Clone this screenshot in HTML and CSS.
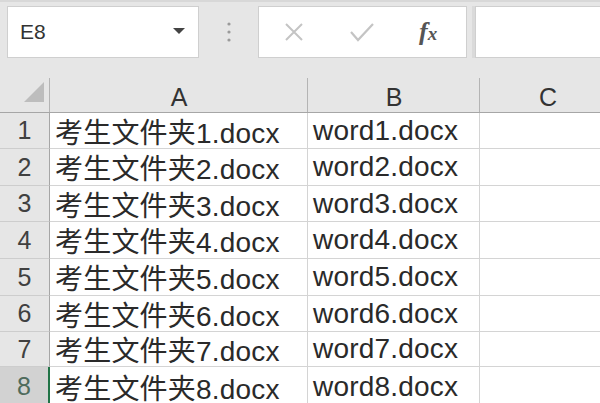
FILE: index.html
```html
<!DOCTYPE html>
<html lang="zh">

<head>
    <meta charset="UTF-8">
    <title>工作表</title>
    <link rel="stylesheet" href="styles.css">
</head>

<body>
    <div class="toolbar">
        <div class="namebox">
            <span class="cellref">E8</span>
            <svg class="caret" width="14" height="8" viewBox="0 0 14 8"><path d="M1 1h12L7 7z" fill="#444"/></svg>
        </div>
        <div class="grip">
            <svg width="6" height="22" viewBox="0 0 6 22">
                <circle cx="3" cy="3" r="1.6" fill="#9a9a9a"/>
                <circle cx="3" cy="11" r="1.6" fill="#9a9a9a"/>
                <circle cx="3" cy="19" r="1.6" fill="#9a9a9a"/>
            </svg>
        </div>
        <div class="fbuttons">
            <svg class="btn" width="22" height="22" viewBox="0 0 22 22"><path d="M3 3l16 16M19 3L3 19" stroke="#c4c4c4" stroke-width="2" fill="none"/></svg>
            <svg class="btn" width="26" height="22" viewBox="0 0 26 22"><path d="M2 11l7 8L24 3" stroke="#c4c4c4" stroke-width="2.2" fill="none"/></svg>
            <span class="fx"><i>f</i><small>x</small></span>
        </div>
        <div class="finput"></div>
    </div>

    <div class="sheet">
        <div class="corner"><svg width="22" height="22" viewBox="0 0 22 22"><path d="M21 1V21H1z" fill="#bdbdbd"/></svg></div>
        <div class="colhead">A</div>
        <div class="colhead">B</div>
        <div class="colhead">C</div>

        <div class="rowhead">1</div><div class="cell">考生文件夹1.docx</div><div class="cell">word1.docx</div><div class="cell"></div>
        <div class="rowhead">2</div><div class="cell">考生文件夹2.docx</div><div class="cell">word2.docx</div><div class="cell"></div>
        <div class="rowhead">3</div><div class="cell">考生文件夹3.docx</div><div class="cell">word3.docx</div><div class="cell"></div>
        <div class="rowhead">4</div><div class="cell">考生文件夹4.docx</div><div class="cell">word4.docx</div><div class="cell"></div>
        <div class="rowhead">5</div><div class="cell">考生文件夹5.docx</div><div class="cell">word5.docx</div><div class="cell"></div>
        <div class="rowhead">6</div><div class="cell">考生文件夹6.docx</div><div class="cell">word6.docx</div><div class="cell"></div>
        <div class="rowhead">7</div><div class="cell">考生文件夹7.docx</div><div class="cell">word7.docx</div><div class="cell"></div>
        <div class="rowhead active">8</div><div class="cell">考生文件夹8.docx</div><div class="cell">word8.docx</div><div class="cell"></div>
    </div>
</body>

</html>
```

FILE: styles.css
```css
body {
    margin: 0;
    padding: 0;
    width: 600px;
    height: 403px;
    overflow: hidden;
    background: #fff;
    font-family: "Liberation Sans", "Noto Sans CJK SC", sans-serif;
    color: #262626;
}

/* 编辑栏 */
.toolbar {
    height: 62px;
    box-sizing: border-box;
    background: #e6e6e6;
    border-top: 2px solid #d8d8d8;
    padding: 4px 0 4px 7px;
    display: flex;
    align-items: stretch;
}

.namebox {
    width: 192px;
    box-sizing: border-box;
    background: #fff;
    border: 1px solid #cfcfcf;
    display: flex;
    align-items: center;
    justify-content: space-between;
    padding: 0 12px 0 12px;
}

.cellref {
    font-size: 21px;
    color: #333;
}

.caret {
    margin-top: -2px;
}

.grip {
    width: 59px;
    display: flex;
    align-items: center;
    justify-content: center;
}

.fbuttons {
    width: 209px;
    box-sizing: border-box;
    background: #fff;
    border: 1px solid #cfcfcf;
    display: flex;
    align-items: center;
    padding-left: 24px;
    gap: 44px;
}

.fx {
    font-family: "Liberation Serif", serif;
    color: #555;
    margin-left: 0;
}

.fx i {
    font-size: 26px;
    font-weight: bold;
}

.fx small {
    font-size: 19px;
    font-style: italic;
    font-weight: bold;
}

.finput {
    flex: 1;
    margin-left: 8px;
    background: #fff;
    border: 1px solid #cfcfcf;
    border-right: 0;
    box-shadow: -3px 0 0 #dadada;
}

/* 表格 */
.sheet {
    display: grid;
    grid-template-columns: 50px 258px 172px 136px;
    grid-template-rows: 51px 36px 37px 36px 37px 37px 36px 35px 40px;
}

.corner,
.colhead {
    position: relative;
    background: #e6e6e6;
    border-bottom: 1px solid #a6a6a6;
    box-sizing: border-box;
}

.corner {
    display: flex;
    align-items: flex-end;
    justify-content: flex-end;
    padding: 0 5px 9px 0;
}

.colhead {
    display: flex;
    align-items: center;
    justify-content: center;
    padding-top: 20px;
    font-size: 25px;
    color: #333;
}

.corner::after,
.colhead::after {
    content: "";
    position: absolute;
    right: 0;
    top: 16px;
    bottom: 0;
    width: 1px;
    background: #b4b4b4;
}

.rowhead {
    background: #e6e6e6;
    border-right: 1px solid #a6a6a6;
    border-bottom: 1px solid #cdcdcd;
    box-sizing: border-box;
    display: flex;
    align-items: center;
    justify-content: center;
    font-size: 25px;
    color: #404040;
}

.rowhead.active {
    background: #d2d2d2;
    color: #4f6b5c;
    border-right: 2px solid #217346;
}

.cell {
    border-right: 1px solid #d4d4d4;
    border-bottom: 1px solid #d4d4d4;
    box-sizing: border-box;
    display: flex;
    align-items: center;
    padding-left: 5px;
    font-size: 28px;
    letter-spacing: 0.2px;
    white-space: nowrap;
    overflow: hidden;
    color: #2a2a2a;
}
```
